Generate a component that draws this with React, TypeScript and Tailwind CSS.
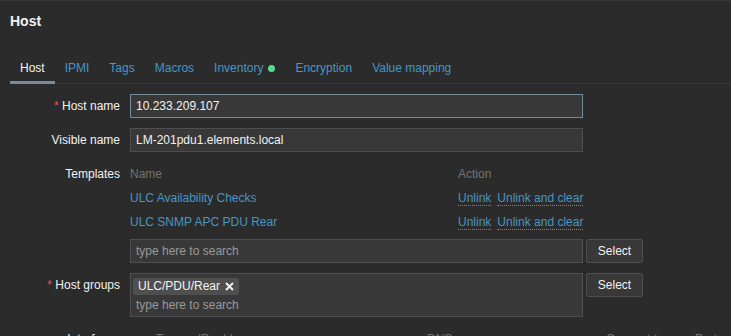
import React from "react";

const tabs = ["Host", "IPMI", "Tags", "Macros", "Inventory", "Encryption", "Value mapping"];

function Label({ text, required }: { text: string; required?: boolean }) {
  return (
    <div className="w-[120px] shrink-0 text-right leading-[24px]">
      {required && <span className="text-[#e45959]">* </span>}
      {text}
    </div>
  );
}

function SelectButton() {
  return (
    <button className="ml-[3px] h-[24px] w-[57px] shrink-0 rounded-[2px] border border-[#4f4f4f] bg-[#383838] text-[12px] leading-[22px] text-[#f2f2f2]">
      Select
    </button>
  );
}

function DottedLink({ children }: { children: React.ReactNode }) {
  return (
    <span className="whitespace-nowrap border-b border-dotted border-[#4796c4] leading-[14px] text-[#4796c4]">
      {children}
    </span>
  );
}

export default function App() {
  return (
    <div className="h-[336px] w-[731px] overflow-hidden border-t border-[#383838] bg-[#2b2b2b] font-['Liberation_Sans',Arial,sans-serif] text-[12px] text-[#f2f2f2]">
      {/* dialogue header */}
      <div className="h-[41px] pl-[10px] pt-[12px]">
        <h1 className="text-[14px] font-bold leading-[16px]">Host</h1>
      </div>

      {/* tabs */}
      <ul className="ml-[10px] mt-[14px] flex border-b border-[#383838]">
        {tabs.map((t, i) => (
          <li
            key={t}
            className={
              i === 0
                ? "-mb-px flex items-center border-b-[3px] border-[#768d99] px-[10px] pb-[6px] pt-[5px] leading-[14px] text-[#f2f2f2]"
                : "-mb-px flex items-center border-b-[3px] border-transparent px-[10px] pb-[6px] pt-[5px] leading-[14px] text-[#4796c4]"
            }
          >
            {t}
            {t === "Inventory" && (
              <span className="ml-[5px] inline-block h-[7px] w-[7px] rounded-full bg-[#59db8f]" />
            )}
          </li>
        ))}
      </ul>

      {/* form */}
      <div className="mt-[10px] flex flex-col">
        <div className="flex">
          <Label text="Host name" required />
          <div className="ml-[10px] h-[24px] w-[453px] border border-[#768d99] bg-[#383838] px-[5px] leading-[22px]">
            10.233.209.107
          </div>
        </div>

        <div className="mt-[10px] flex">
          <Label text="Visible name" />
          <div className="ml-[10px] h-[24px] w-[453px] border border-[#4f4f4f] bg-[#383838] px-[5px] leading-[22px]">
            LM-201pdu1.elements.local
          </div>
        </div>

        <div className="mt-[10px] flex">
          <Label text="Templates" />
          <div className="ml-[10px] flex flex-col">
            <div className="flex h-[24px] w-[453px] items-center text-[#737373]">
              <span className="w-[328px]">Name</span>
              <span>Action</span>
            </div>
            {["ULC Availability Checks", "ULC SNMP APC PDU Rear"].map((n) => (
              <div key={n} className="flex h-[24px] w-[453px] items-center">
                <span className="w-[328px] shrink-0 text-[#4796c4]">{n}</span>
                <DottedLink>Unlink</DottedLink>
                <span className="ml-[6px] shrink-0">
                  <DottedLink>Unlink and clear</DottedLink>
                </span>
              </div>
            ))}
            <div className="mt-[5px] flex">
              <div className="h-[24px] w-[453px] border border-[#4f4f4f] bg-[#383838] px-[5px] leading-[22px] text-[#9a9a9a]">
                type here to search
              </div>
              <SelectButton />
            </div>
          </div>
        </div>

        <div className="mt-[10px] flex">
          <Label text="Host groups" required />
          <div className="ml-[10px] flex items-start">
            <div className="h-[44px] w-[453px] border border-[#4f4f4f] bg-[#383838] px-[2px] pt-[3px]">
              <div className="inline-flex h-[17px] items-center rounded-[2px] bg-[#4f4f4f] pl-[5px] pr-[5px] leading-[17px]">
                ULC/PDU/Rear
                <svg className="ml-[5px]" width="9" height="9" viewBox="0 0 9 9">
                  <path d="M1 1L8 8M8 1L1 8" stroke="#f2f2f2" strokeWidth="2" />
                </svg>
              </div>
              <div className="pl-[3px] leading-[20px] text-[#9a9a9a]">type here to search</div>
            </div>
            <SelectButton />
          </div>
        </div>

        <div className="mt-[10px] flex">
          <Label text="Interfaces" />
          <div className="ml-[10px] flex h-[24px] items-center text-[#737373]">
            <span className="w-[26px]" />
            <span className="w-[42px]">Type</span>
            <span className="w-[229px]">IP address</span>
            <span className="w-[179px]">DNS name</span>
            <span className="w-[89px]">Connect to</span>
            <span>Port</span>
          </div>
        </div>
      </div>
    </div>
  );
}
